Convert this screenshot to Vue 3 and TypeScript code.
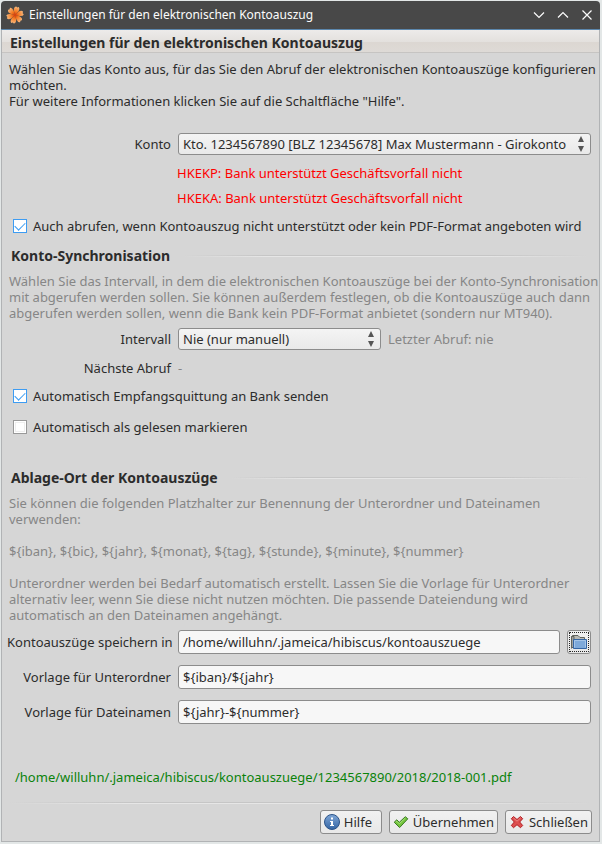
<script setup lang="ts">
import { ref, computed } from 'vue'

const accounts = ['Kto. 1234567890 [BLZ 12345678] Max Mustermann - Girokonto']
const intervals = ['Nie (nur manuell)', 'Täglich', 'Wöchentlich', 'Monatlich']
const warnings = [
  'HKEKP: Bank unterstützt Geschäftsvorfall nicht',
  'HKEKA: Bank unterstützt Geschäftsvorfall nicht',
]
const placeholders = ['iban', 'bic', 'jahr', 'monat', 'tag', 'stunde', 'minute', 'nummer']

const account = ref(accounts[0])
const interval = ref(intervals[0])
const fetchAlways = ref(true)
const sendReceipt = ref(true)
const markRead = ref(false)
const folder = ref('/home/willuhn/.jameica/hibiscus/kontoauszuege')
const subfolder = ref('${iban}/${jahr}')
const filename = ref('${jahr}-${nummer}')

const sample: Record<string, string> = { iban: '1234567890', jahr: '2018', nummer: '001' }
const fill = (tpl: string): string => tpl.replace(/\$\{(\w+)\}/g, (all, key: string) => sample[key] ?? all)
const preview = computed(() => `${folder.value}/${fill(subfolder.value)}/${fill(filename.value)}.pdf`)
const placeholderList = placeholders.map((p) => '${' + p + '}').join(', ')
</script>

<template>
  <div class="window">
    <header class="titlebar">
      <svg class="logo" viewBox="0 0 18 18" aria-hidden="true">
        <defs>
          <radialGradient id="petal" gradientUnits="userSpaceOnUse" cx="9" cy="9" r="9">
            <stop offset="0" stop-color="#d93808" />
            <stop offset="0.4" stop-color="#f57a22" />
            <stop offset="1" stop-color="#f8be84" />
          </radialGradient>
        </defs>
        <g fill="url(#petal)">
          <path
            v-for="n in 6"
            :key="n"
            :transform="`rotate(${n * 60 + 15} 9 9)`"
            d="M9 9.5 L6.6 4.5 Q5.8 1.2 8 .4 L9.2 1.2 L10.5 .3 Q12.4 1.6 11.2 4.7Z"
          />
        </g>
      </svg>
      <span class="caption">Einstellungen für den elektronischen Kontoauszug</span>
      <div class="controls">
        <button type="button" aria-label="Minimieren">
          <svg viewBox="0 0 12 12"><path d="M1 3.5 6 8.5 11 3.5" /></svg>
        </button>
        <button type="button" aria-label="Maximieren">
          <svg viewBox="0 0 12 12"><path d="M1 8.5 6 3.5 11 8.5" /></svg>
        </button>
        <button type="button" aria-label="Fenster schließen">
          <svg viewBox="0 0 12 12"><path d="M1.5 1.5 10.5 10.5M10.5 1.5 1.5 10.5" /></svg>
        </button>
      </div>
    </header>

    <main class="body">
      <h1 class="banner">Einstellungen für den elektronischen Kontoauszug</h1>

      <p class="text">
        Wählen Sie das Konto aus, für das Sie den Abruf der elektronischen Kontoauszüge konfigurieren<br />möchten.<br />Für
        weitere Informationen klicken Sie auf die Schaltfläche "Hilfe".
      </p>

      <div class="row account">
        <label for="account">Konto</label>
        <div class="select wide">
          <select id="account" v-model="account">
            <option v-for="a in accounts" :key="a">{{ a }}</option>
          </select>
          <svg viewBox="0 0 6 16" aria-hidden="true"><path d="M3 0 6 6H0ZM0 10H6L3 16Z" /></svg>
        </div>
      </div>
      <div class="warnings">
        <p v-for="w in warnings" :key="w">{{ w }}</p>
      </div>
      <label class="check"><input v-model="fetchAlways" type="checkbox" />Auch abrufen, wenn Kontoauszug nicht unterstützt oder kein PDF-Format angeboten wird</label>

      <h2 class="section">Konto-Synchronisation</h2>
      <p class="text muted">
        Wählen Sie das Intervall, in dem die elektronischen Kontoauszüge bei der Konto-Synchronisation<br />mit abgerufen
        werden sollen. Sie können außerdem festlegen, ob die Kontoauszüge auch dann<br />abgerufen werden sollen, wenn die
        Bank kein PDF-Format anbietet (sondern nur MT940).
      </p>
      <div class="row interval">
        <label for="interval">Intervall</label>
        <div class="select">
          <select id="interval" v-model="interval">
            <option v-for="i in intervals" :key="i">{{ i }}</option>
          </select>
          <svg viewBox="0 0 6 16" aria-hidden="true"><path d="M3 0 6 6H0ZM0 10H6L3 16Z" /></svg>
        </div>
        <span class="muted">Letzter Abruf: nie</span>
      </div>
      <div class="row next">
        <span class="name">Nächste Abruf</span>
        <span class="muted">-</span>
      </div>
      <label class="check"><input v-model="sendReceipt" type="checkbox" />Automatisch Empfangsquittung an Bank senden</label>
      <label class="check second"><input v-model="markRead" type="checkbox" />Automatisch als gelesen markieren</label>

      <h2 class="section storage">Ablage-Ort der Kontoauszüge</h2>
      <p class="text muted">
        Sie können die folgenden Platzhalter zur Benennung der Unterordner und Dateinamen<br />verwenden:<br /><br />{{
          placeholderList
        }}<br /><br />Unterordner werden bei Bedarf automatisch erstellt. Lassen Sie die Vorlage für Unterordner<br />alternativ
        leer, wenn Sie diese nicht nutzen möchten. Die passende Dateiendung wird<br />automatisch an den Dateinamen
        angehängt.
      </p>
      <div class="fields">
        <div class="row">
          <label for="folder">Kontoauszüge speichern in</label>
          <input id="folder" v-model="folder" type="text" />
          <button class="btn browse" type="button" aria-label="Ordner auswählen">
            <svg viewBox="0 0 18 18" aria-hidden="true">
              <path d="M1.5 15.5V3.5L2.5 2.5H8L10 4.5H14.5V7" fill="#b9bab5" stroke="#62645f" />
              <path d="M1.5 14.5V3.5H4V14.5Z" fill="#a3a49f" stroke="#62645f" />
              <path d="M3.5 6.5H16.5V15.5H3.5Z" fill="#7ea9da" stroke="#3465a4" stroke-linejoin="round" />
              <path d="M4.5 14.5V7.5H15.5V14.5" fill="none" stroke="#a6c5e8" />
            </svg>
          </button>
        </div>
        <div class="row">
          <label for="subfolder">Vorlage für Unterordner</label>
          <input id="subfolder" v-model="subfolder" type="text" />
        </div>
        <div class="row">
          <label for="filename">Vorlage für Dateinamen</label>
          <input id="filename" v-model="filename" type="text" />
        </div>
      </div>

      <p class="preview">{{ preview }}</p>

      <footer class="actions">
        <button class="btn" type="button">
          <svg viewBox="0 0 16 16" aria-hidden="true">
            <defs>
              <linearGradient id="info" x2="0" y2="1">
                <stop offset="0" stop-color="#80a7d7" />
                <stop offset="1" stop-color="#3465a4" />
              </linearGradient>
            </defs>
            <circle cx="8" cy="8" r="7.5" fill="url(#info)" stroke="#2d5489" />
            <path d="M7 3.5H9V5.5H7ZM6 7H9V11H10V12H6V11H7V8H6Z" fill="#fff" />
          </svg>Hilfe
        </button>
        <button class="btn" type="button">
          <svg viewBox="0 0 16 16" aria-hidden="true">
            <path d="M1.2 8.2 3.8 5.8 6.3 8.3 12.3 2.7 14.8 4.8 6.6 13.6Z" fill="#73c43c" stroke="#3b7a25" stroke-linejoin="round" />
            <path d="M2.8 8 3.8 7.2 6.3 9.8 12.3 4.1" fill="none" stroke="#a9e27c" />
          </svg>Übernehmen
        </button>
        <button class="btn" type="button">
          <svg viewBox="0 0 16 16" aria-hidden="true">
            <path
              d="M4.5 2.5 8 5.5 11.5 2.5 13.7 4.7 10.7 8 13.7 11.5 11.5 13.7 8 10.7 4.5 13.7 2.3 11.5 5.3 8 2.3 4.7Z"
              fill="#dd4f4f"
              stroke="#b31f24"
              stroke-linejoin="round"
            />
            <path d="M4.5 4 8 7.2 11.5 4" fill="none" stroke="#ee8583" />
          </svg>Schließen
        </button>
      </footer>
    </main>
  </div>
</template>

<style>
body {
  background: #e3e7e7;
}
</style>

<style scoped>
.window {
  margin: 1px 2px 1px 1px;
  font: 13px/16px 'Noto Sans', sans-serif;
  color: #2c2c2c;
}
p,
h1,
h2 {
  margin: 0;
}
.titlebar {
  display: flex;
  align-items: center;
  gap: 5px;
  height: 28px;
  padding: 0 7px 0 5px;
  border-bottom: 1px solid #5c87ad;
  border-radius: 4px 4px 0 0;
  background: #484848;
  color: #fcfcfc;
  font-size: 12px;
}
.logo {
  width: 18px;
  height: 18px;
}
.caption {
  flex: 1;
}
.controls {
  display: flex;
  gap: 12px;
}
.controls button {
  display: flex;
  padding: 0;
  border: 0;
  background: none;
}
.controls svg {
  width: 12px;
  height: 12px;
  fill: none;
  stroke: #fcfcfc;
  stroke-width: 1.2;
}
.body {
  padding-bottom: 7px;
  border: 1px solid #b1b3b5;
  border-top: 0;
  background: #d6d6d6;
}
.banner {
  height: 22px;
  padding: 0 8px;
  border-bottom: 1px solid #c6c4c2;
  background: linear-gradient(#edebea 0, #e3e0dd 55%, #dcd7d2 56%, #dedad6 100%);
  font-size: 14px;
  line-height: 25px;
}
.text {
  padding: 8px 0 0 7px;
  white-space: nowrap;
}
.muted {
  color: #868686;
}
.row {
  display: flex;
  align-items: center;
  gap: 7px;
  padding: 0 8px 0 5px;
}
.row > label,
.row > .name {
  flex: none;
  width: 164px;
  text-align: right;
  white-space: nowrap;
}
.account {
  padding-top: 24px;
}
.interval {
  padding-top: 7px;
}
.next {
  padding-top: 10px;
}
.select {
  display: grid;
  grid-template-columns: 1fr 20px;
  align-items: center;
  width: 203px;
}
.select.wide {
  width: auto;
  min-width: 0;
  flex: 1;
}
.select select {
  grid-area: 1 / 1 / 2 / 3;
  width: 100%;
  height: 22px;
  padding: 0 20px 0 4px;
  border: 1px solid #8c8c8c;
  border-radius: 3px;
  appearance: none;
  background: linear-gradient(#f4f4f4, #e9e9e9);
  color: inherit;
  font: inherit;
}
.select svg {
  grid-area: 1 / 2;
  justify-self: center;
  z-index: 1;
  width: 6px;
  height: 16px;
  fill: #555;
  pointer-events: none;
}
.warnings {
  display: grid;
  gap: 9px;
  padding: 10px 8px 0 175px;
  color: #f00;
}
.check {
  display: flex;
  align-items: center;
  gap: 6px;
  padding: 12px 11px 0;
  white-space: nowrap;
}
.check.second {
  padding-top: 15px;
}
.check input {
  width: 14px;
  height: 14px;
  margin: 0;
  border: 1px solid #999;
  appearance: none;
  background: #fff;
  box-shadow: inset 0 0 0 1px #fff, inset 0 0 0 2px #eee;
}
.check input:checked {
  border-color: #3d9cf2;
  box-shadow: none;
}
.check input:checked::before {
  content: '';
  display: block;
  width: 10px;
  height: 6px;
  margin: 2px 0 0 1px;
  border: solid #3d9cf2;
  border-width: 0 0 1px 1px;
  box-sizing: border-box;
  transform: rotate(-45deg);
}
.section {
  display: flex;
  align-items: center;
  gap: 14px;
  padding: 14px 11px 1px 9px;
  font-size: 14px;
}
.section::after,
.actions::before {
  content: '';
  height: 2px;
  background: linear-gradient(90deg, #d6d6d6, transparent 20% 75%, #d6d6d6), linear-gradient(#c6c6c6 50%, #e6e6e6 50%);
}
.section::after {
  flex: 1;
}
.storage {
  padding-top: 35px;
}
.fields {
  display: grid;
  gap: 11px;
  padding-top: 7px;
}
.row input {
  flex: 1;
  min-width: 0;
  height: 24px;
  padding: 0 4px;
  border: 1px solid #8c8c8c;
  border-radius: 3px;
  box-sizing: border-box;
  background: #f7f7f7;
  color: inherit;
  font: inherit;
}
.preview {
  padding: 45px 13px 17px;
  color: #0a820a;
}
.actions {
  display: flex;
  flex-wrap: wrap;
  justify-content: flex-end;
  gap: 6px 7px;
  padding: 0 7px;
}
.actions::before {
  flex: 0 0 100%;
}
.btn {
  display: flex;
  align-items: center;
  gap: 4px;
  height: 24px;
  padding: 0 3px;
  border: 1px solid #8c8c8c;
  border-radius: 3px;
  background: linear-gradient(#f1f1f1, #e8e8e8);
  color: inherit;
  font: inherit;
}
.actions .btn {
  min-width: 62px;
}
.btn svg {
  width: 16px;
  height: 16px;
}
.browse {
  padding: 0 2px;
  outline: 1px dotted #222;
  outline-offset: -3px;
}
.browse svg {
  width: 18px;
  height: 18px;
}
</style>
